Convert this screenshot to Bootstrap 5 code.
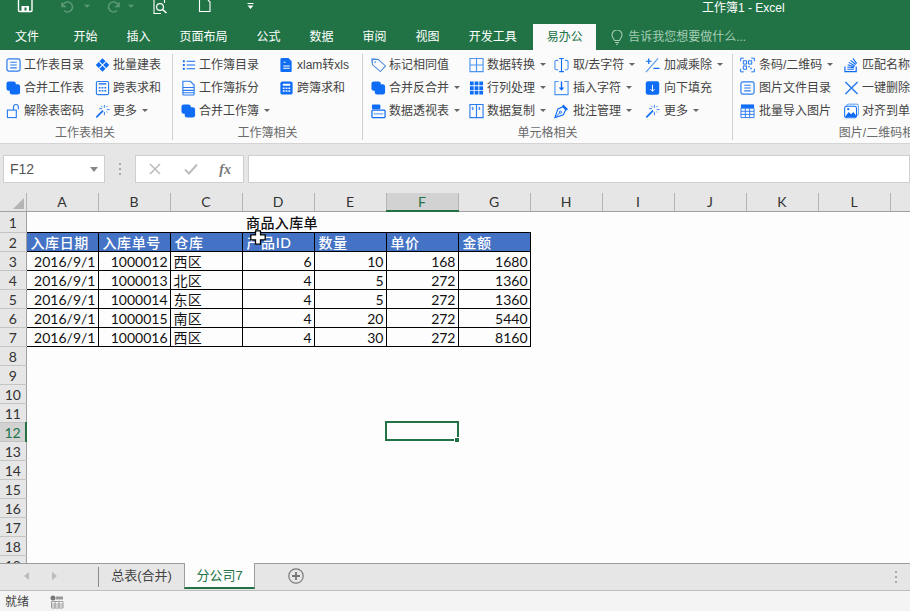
<!DOCTYPE html>
<html lang="zh-CN">
<head>
<meta charset="utf-8">
<title>工作簿1 - Excel</title>
<link href="https://cdn.jsdelivr.net/npm/bootstrap@5.3.0/dist/css/bootstrap.min.css" rel="stylesheet">
<style>
html,body{margin:0;height:611px;overflow:hidden;background:#e6e6e6}
body{font-family:"Liberation Sans","Noto Sans CJK SC",sans-serif;font-size:12px;color:#444;position:relative}
.app-shell{width:910px;height:611px;overflow:hidden}
.title-row{height:24px;background:#217346;color:#fff;flex:none}
.qat-strip{width:702px;height:24px;flex:none}
.title-text{line-height:14px;padding-top:1px}
.tab-row{height:26px;background:#217346;flex:none}
.tab-item{color:#fff;padding:0 14.5px;line-height:26px;white-space:nowrap}
.tab-first{padding-left:15px;padding-right:20px}
.tab-gap{padding-right:16.5px}
.tab-on{background:#fafafa;color:#217346;padding:0 13.5px;line-height:26px;width:63px}
.tell-me{color:#a5cdb5;margin-left:15px;gap:5px;line-height:26px;white-space:nowrap}
.ribbon-bar{height:94px;background:#fbfbfb;border-bottom:1px solid #d4d4d4;flex:none}
.rb-group{padding-top:3px;flex:none;height:93px}
.rb-sep{width:1px;background:#d0d0d0;height:86px;margin-top:4px;flex:none}
.g1{width:172px;padding-left:6px}.g2{width:189px;padding-left:8px}.g3{width:369px;padding-left:8px}.g4{width:300px;padding-left:7px}
.rb-cols{height:69px}
.w89{width:89px}.w98{width:98px}.w85{width:85px}.w91{width:91px}.w104{width:104px}
.rb-item{height:23px;white-space:nowrap;color:#444}
.rb-ic{width:15px;height:16px;margin-right:3px;flex:none;overflow:visible}
.wide-ic .rb-ic{margin-right:4px}
.rb-title{color:#6a6a6a;line-height:22px;text-align:center;margin-left:-8px}
.tri-down{display:inline-block;width:0;height:0;border:3px solid transparent;border-top:3.5px solid #666;border-bottom:0;margin-left:5px}
.fx-band{height:49px;padding:11px 0 10px 3px;background:#e6e6e6;flex:none}
.fx-box{height:28px;background:#fff;border:1px solid #cfcfcf}
.name-box{width:102px;padding:0 6px;font-size:14px;color:#555}
.name-box .tri-down{border-width:4px;border-top-width:5px;border-top-color:#888}
.fx-dots{width:30px}
.dot-v{width:2px;height:2px;background:#aaa;box-shadow:0 -5px 0 #aaa,0 5px 0 #aaa}
.fx-tools{width:109px;padding:0 12px 0 12px}
.fx-glyph{font-family:"Liberation Serif",serif;font-style:italic;font-weight:700;font-size:14px;color:#777}
.fx-input{margin-left:4px;flex:1 1 auto}
.grid-wrap{height:370px;overflow:hidden;background:#fdfdfd;flex:none}
.sheet{table-layout:fixed;border-collapse:collapse;width:962px;font-family:Lato,"Noto Sans CJK SC",sans-serif;font-size:14px;color:#111}
.sheet col.rh{width:26px}.sheet col.ch{width:72px}
.sheet td,.sheet th{padding:2px 1px 0;height:19px;line-height:16px;font-weight:400;white-space:nowrap;overflow:visible}
.sheet tr.hd-row th{height:18px;padding-top:1px;background:#e6e6e6;color:#333;text-align:center;border-bottom:1px solid #a0a0a0;border-right:1px solid #b5b5b5;line-height:16px}
.corner{position:relative}
.corner::after{content:"";position:absolute;right:2px;bottom:2px;border:0 solid transparent;border-width:0 0 11px 11px;border-bottom-color:#b4b4b4}
.sheet tr.hd-row th.col-on{background:#d2d2d2;color:#217346;border-bottom:2px solid #217346}
.sheet tbody th{background:#e6e6e6;color:#333;text-align:center;border-right:1px solid #a0a0a0;border-bottom:1px solid #c4c4c4}
.sheet tbody th.row-on{background:#d2d2d2;color:#217346;border-right:2px solid #217346}
.sheet tr.tall-row td,.sheet tr.tall-row th{height:21px;line-height:18px}
.sheet td.box{border:1px solid #000;padding:2px 2px 0}
.sheet td.num{text-align:right}
.sheet td.head{background:#4472c4;color:#fff;font-weight:500;letter-spacing:.6px;padding-left:4px}
.sheet td.cn{letter-spacing:.3px;padding-left:3px}
.sheet td.ttl{font-weight:500;padding-left:4px;letter-spacing:.4px}
.sel-cell{position:relative}
.sel-cell::before{content:"";position:absolute;left:-1px;top:-1px;width:74px;height:20px;border:2px solid #217346}
.sel-cell::after{content:"";position:absolute;right:-2px;bottom:-2px;width:6px;height:6px;background:#217346;border:1px solid #fff}
.mouse-cross{position:absolute;left:250px;top:230px;width:16px;height:15px}
.tab-strip{height:28px;background:#e6e6e6;border-top:1px solid #9c9c9c;border-bottom:1px solid #bdbdbd;flex:none}
.arrows-area{width:98px;height:24px;padding-left:24px;gap:23px}
.arr-l,.arr-r{width:0;height:0;border:4px solid transparent;border-left-width:0}
.arr-l{border-right:5px solid #bbb}
.arr-r{border-left:5px solid #bbb;border-right-width:0}
.tab-div{width:1px;height:20px;background:#8a8a8a;margin-top:3px}
.sh-tab{color:#444;width:85px;text-align:center;height:22px;line-height:22px;font-size:13px;white-space:nowrap;margin-top:1px}
.sh-on{width:71px;background:#fdfdfd;color:#217346;border-left:1px solid #9c9c9c;border-right:1px solid #9c9c9c;margin-top:-1px;height:26px;line-height:26px;border-bottom:2px solid #217346;text-align:center;font-size:13px;white-space:nowrap}
.add-sheet{margin-left:33px;width:16px;height:16px;flex:none}
.more-dots{margin-left:auto;margin-right:13px}
.status-row{height:20px;background:#f4f4f4;padding-left:5px;padding-top:1px;flex:none}
.status-ic{width:14px;height:14px;margin-left:21px}
</style>
</head>
<body>
<svg width="0" height="0" class="position-absolute">
<defs>
<symbol id="i-doclist" viewBox="0 0 16 16"><rect x="1" y="1.5" width="14" height="13" rx="2" fill="none" stroke="#2b7cf0" stroke-width="1.3"/><path d="M4.5 5h7M4.5 8h7M4.5 11h7" stroke="#2b7cf0" stroke-width="1.2"/></symbol>
<symbol id="i-diamond" viewBox="0 0 16 16"><path d="M8 .8 15.2 8 8 15.2.8 8z" fill="#0f6cf5"/><path d="M4.4 4.4 11.6 11.6M11.6 4.4 4.4 11.6" stroke="#fff" stroke-width="1.1"/></symbol>
<symbol id="i-stack" viewBox="0 0 16 16"><rect x=".5" y="1" width="10" height="10" rx="2.5" fill="#0f6cf5"/><rect x="4" y="4" width="11" height="11" rx="2.5" fill="#0f6cf5"/></symbol>
<symbol id="i-calc" viewBox="0 0 16 16"><rect x="1.5" y="1" width="13" height="14" rx="1.5" fill="none" stroke="#2b7cf0" stroke-width="1.2"/><path d="M4 3.6h8" stroke="#2b7cf0" stroke-width="1.6"/><path d="M4 7h2v1.6H4zM7 7h2v1.6H7zM10 7h2v1.6h-2zM4 10h2v1.6H4zM7 10h2v1.6H7zM10 10h2v1.6h-2z" fill="#2b7cf0"/></symbol>
<symbol id="i-lock" viewBox="0 0 16 16"><rect x="1.5" y="7" width="9.5" height="8" fill="none" stroke="#2b7cf0" stroke-width="1.2"/><path d="M8 7V3.6a2.6 2.6 0 0 1 5.2 0V6" fill="none" stroke="#2b7cf0" stroke-width="1.2"/></symbol>
<symbol id="i-wand" viewBox="0 0 16 16"><path d="M.8 14.2 8 7l1.2 1.2L2 15.4z" fill="#0f6cf5"/><path d="M10 1.5v3M10 9v3.5M12.5 6.500h3M4.500 5.500h3M6.500 2.500l1.500 1.500M13.500 2.500 12 4M13 9.500 12 8.500" stroke="#2b7cf0" stroke-width="1" fill="none"/></symbol>
<symbol id="i-list" viewBox="0 0 16 16"><path d="M2 3h2v2H2zM2 7h2v2H2zM2 11h2v2H2z" fill="#0f6cf5"/><path d="M6 4h9M6 8h9M6 12h9" stroke="#0f6cf5" stroke-width="1.300"/></symbol>
<symbol id="i-filetab" viewBox="0 0 16 16"><path d="M2 .8h8l4 4v9.700a1 1 0 0 1-1 1H3a1 1 0 0 1-1-1z" fill="none" stroke="#2b7cf0" stroke-width="1.200"/><path d="M2 7.500h12M2 10.500h12M2 13h12" stroke="#2b7cf0" stroke-width="1.200"/></symbol>
<symbol id="i-filexl" viewBox="0 0 16 16"><path d="M2.500.5h7.500l3.500 3.500v10.500a1 1 0 0 1-1 1h-10a1 1 0 0 1-1-1V1.500z" fill="#0f6cf5"/><path d="M4.500 9h7M4.500 11.500h7M5 5h2" stroke="#fff" stroke-width="1.100"/></symbol>
<symbol id="i-calcs" viewBox="0 0 16 16"><rect x="1.500" y="1" width="13" height="14" rx="2" fill="#0f6cf5"/><path d="M4 3.500h8v2H4zM4 7.500h2v1.500H4zM7 7.500h2v1.500H7zM10 7.500h2v1.500h-2zM4 10.500h2V12H4zM7 10.500h2V12H7zM10 10.500h2V12h-2z" fill="#fff"/></symbol>
<symbol id="i-tag" viewBox="0 0 16 16"><path d="M1.500 2h6l8 7-5.500 6-8.500-7.500z" fill="none" stroke="#4d8bd6" stroke-width="1.100"/><circle cx="4.500" cy="5" r="1.200" fill="#8ab6ee"/><path d="M.5 5.500V1h4" fill="none" stroke="#8ab6ee"/></symbol>
<symbol id="i-win" viewBox="0 0 16 16"><path d="M1 1h14v14H1zM8 1v14M1 8h14" fill="none" stroke="#4d94ef" stroke-width="1.200"/></symbol>
<symbol id="i-grid" viewBox="0 0 16 16"><path d="M1 1h4v4H1zM6 1h4v4H6zM11 1h4v4h-4zM1 6h4v4H1zM6 6h4v4H6zM11 6h4v4h-4zM1 11h4v4H1zM6 11h4v4H6zM11 11h4v4h-4z" fill="#0f6cf5"/></symbol>
<symbol id="i-pivot" viewBox="0 0 16 16"><rect x="1" y="1" width="9" height="5" rx="1" fill="#0f6cf5"/><rect x="1" y="7" width="14" height="8" rx="1" fill="none" stroke="#0f6cf5" stroke-width="1.300"/><path d="M3 11h10" stroke="#7aaef5" stroke-width="1.500"/></symbol>
<symbol id="i-wcopy" viewBox="0 0 16 16"><path d="M1 1h14v14H1zM8 1v14" fill="none" stroke="#2b7cf0" stroke-width="1.200"/><path d="M4 3.500v3M11 3.500v3" stroke="#2b7cf0" stroke-width="1.100"/><path d="M3 5.500l1 1.300 1-1.300M10 5.500l1 1.300 1-1.300" fill="none" stroke="#2b7cf0" stroke-width=".8"/></symbol>
<symbol id="i-ibeam" viewBox="0 0 16 16"><path d="M4.500 3H2.500A1.500 1.500 0 0 0 1 4.500v7A1.500 1.500 0 0 0 2.500 13h2M11.500 3h2A1.500 1.500 0 0 1 15 4.500v7a1.500 1.500 0 0 1-1.500 1.500h-2" fill="none" stroke="#4d94ef" stroke-width="1.200"/><path d="M5.500 1H10.500M5.500 15h5M8 1v14" fill="none" stroke="#0f6cf5" stroke-width="1.200"/></symbol>
<symbol id="i-ins" viewBox="0 0 16 16"><path d="M5 1H1v14h14V1h-4" fill="none" stroke="#4d94ef" stroke-width="1.200"/><path d="M8 1v8" stroke="#0f6cf5" stroke-width="1.500"/><path d="M5 7.500h6L8 11z" fill="#0f6cf5"/></symbol>
<symbol id="i-pen" viewBox="0 0 16 16"><path d="M9.500 3.500 12.500 6.500 10 12 1 15 4 6z" fill="none" stroke="#0f6cf5" stroke-width="1.200"/><path d="M10 1l5 5-2 1.500-4.500-4.500z" fill="#0f6cf5"/><path d="M1.500 14.500 6 10" stroke="#0f6cf5"/><circle cx="6.800" cy="9.200" r="1.200" fill="none" stroke="#0f6cf5"/></symbol>
<symbol id="i-pm" viewBox="0 0 16 16"><path d="M1 4h6M4 1v6M9 11.500h6.500" stroke="#0f6cf5" stroke-width="1.300"/><path d="M1 15.500 14 1" stroke="#4d94ef" stroke-width="1.100"/></symbol>
<symbol id="i-down" viewBox="0 0 16 16"><rect x=".8" y=".8" width="14.400" height="14.400" rx="2.500" fill="#0f6cf5"/><path d="M8 4.500v7M5.800 9.200 8 11.500l2.200-2.300" fill="none" stroke="#fff" stroke-width="1"/></symbol>
<symbol id="i-qr" viewBox="0 0 16 16"><path d="M.7 4V.7H4M12 .7h3.300V4M.7 12v3.300H4M12 15.300h3.300V12" fill="none" stroke="#0f6cf5" stroke-width="1"/><path d="M3.500 3.500h3.500v3.500H3.500zM9 3.500h3.500v3.500H9zM3.500 9h3.500v3.500H3.500z" fill="none" stroke="#0f6cf5"/><path d="M9 9h1.500v1.500H9zM11 11h1.500v1.500H11z" fill="#0f6cf5"/></symbol>
<symbol id="i-so" viewBox="0 0 16 16"><path d="M1 9.500v5.500h12V9.500" fill="none" stroke="#0f6cf5" stroke-width="1.300"/><path d="M3.500 12.500h7M3.500 10.200l7 .6M4 7.800l7 2M5 5.200l6.500 3.500M7 3l5.500 4.500M9.500 1l4 5.500" stroke="#0f6cf5" stroke-width="1.200" fill="none"/></symbol>
<symbol id="i-x" viewBox="0 0 16 16"><path d="M1.500 1.500 14.500 14.500M14.500 1.500 1.500 14.500" stroke="#2b7cf0" stroke-width="1.600"/></symbol>
<symbol id="i-img" viewBox="0 0 16 16"><rect x="3" y=".7" width="12.300" height="12" rx="1.500" fill="none" stroke="#4d94ef"/><rect x=".7" y="3" width="12.600" height="12.300" rx="2" fill="#fff" stroke="#0f6cf5" stroke-width="1.100"/><path d="M1.500 13.500 5 9l2.500 2.500L10 9l3 4v1.500H1.500z" fill="#0f6cf5"/><circle cx="4.500" cy="6" r="1.200" fill="#0f6cf5"/></symbol>
<symbol id="i-tbl" viewBox="0 0 16 16"><path d="M1 1h14v4H1z" fill="#0f6cf5"/><path d="M1 5h14v10H1zM1 8.300h14M1 11.600h14M5.700 5v10M10.300 5v10" fill="none" stroke="#2b7cf0" stroke-width="1"/></symbol>
</defs>
</svg>

<div class="app-shell d-flex flex-column">
  <div class="title-row d-flex">
    <svg class="qat-strip" viewBox="0 0 702 24">
      <path d="M18.500 0V10.500a1 1 0 0 0 1 1h11.500a1 1 0 0 0 1-1V0" fill="none" stroke="#fff" stroke-width="1.400"/>
      <path d="M21.500 6h7.500v5h-7.500z" fill="#fff"/><path d="M24.500 7.500h2v3h-2z" fill="#217346"/>
      <path d="M63 2.500v4h4M63.500 6.500a5 5 0 1 1 1.500 4" fill="none" stroke="#5c9a78" stroke-width="1.500" transform="translate(-1 0)"/>
      <path d="M84 4.800h6L87 7.800z" fill="#5c9a78"/>
      <path d="M119 2.500v4h-4M118.500 6.500a5 5 0 1 0-1.500 4" fill="none" stroke="#5c9a78" stroke-width="1.500"/>
      <path d="M128 4.800h6L131 7.800z" fill="#5c9a78"/>
      <path d="M154 0v13.500h7M164.500 0v3" fill="none" stroke="#fff" stroke-width="1.100"/>
      <circle cx="160" cy="7" r="3.400" fill="none" stroke="#fff" stroke-width="1.200"/><path d="M162.500 9.500l4 3.500" stroke="#fff" stroke-width="1.600"/>
      <path d="M199.500 0v11.500h10.500V2L208 0" fill="none" stroke="#fff" stroke-width="1.100"/>
      <path d="M247.500 3.500h6" stroke="#fff" stroke-width="1"/><path d="M247.500 5.500h6L250.500 9z" fill="#fff"/>
    </svg>
    <div class="title-text">工作簿1 - Excel</div>
  </div>

  <nav class="tab-row d-flex">
    <div class="tab-item tab-first">文件</div>
    <div class="tab-item">开始</div>
    <div class="tab-item">插入</div>
    <div class="tab-item">页面布局</div>
    <div class="tab-item">公式</div>
    <div class="tab-item">数据</div>
    <div class="tab-item">审阅</div>
    <div class="tab-item">视图</div>
    <div class="tab-item tab-gap">开发工具</div>
    <div class="tab-on">易办公</div>
    <div class="tell-me d-flex align-items-center">
      <svg width="12" height="15" viewBox="0 0 12 15"><path d="M3.500 10.500C3 8.500 1 7.800 1 5a5 5 0 0 1 10 0c0 2.800-2 3.500-2.500 5.500zM4 12.500h4M5 14.300h2" fill="none" stroke="#a5cdb5" stroke-width="1.100"/></svg>
      <span>告诉我您想要做什么...</span>
    </div>
  </nav>

  <div class="ribbon-bar d-flex">
    <section class="rb-group g1">
      <div class="rb-cols d-flex">
        <div class="w89">
          <div class="rb-item d-flex align-items-center"><svg class="rb-ic"><use href="#i-doclist"/></svg>工作表目录</div>
          <div class="rb-item d-flex align-items-center"><svg class="rb-ic"><use href="#i-stack"/></svg>合并工作表</div>
          <div class="rb-item d-flex align-items-center"><svg class="rb-ic"><use href="#i-lock"/></svg>解除表密码</div>
        </div>
        <div>
          <div class="rb-item d-flex align-items-center"><svg class="rb-ic"><use href="#i-diamond"/></svg>批量建表</div>
          <div class="rb-item d-flex align-items-center"><svg class="rb-ic"><use href="#i-calc"/></svg>跨表求和</div>
          <div class="rb-item d-flex align-items-center"><svg class="rb-ic"><use href="#i-wand"/></svg>更多<span class="tri-down"></span></div>
        </div>
      </div>
      <div class="rb-title">工作表相关</div>
    </section>
    <div class="rb-sep"></div>
    <section class="rb-group g2">
      <div class="rb-cols d-flex">
        <div class="w98">
          <div class="rb-item d-flex align-items-center"><svg class="rb-ic"><use href="#i-list"/></svg>工作簿目录</div>
          <div class="rb-item d-flex align-items-center"><svg class="rb-ic"><use href="#i-filetab"/></svg>工作簿拆分</div>
          <div class="rb-item d-flex align-items-center"><svg class="rb-ic"><use href="#i-stack"/></svg>合并工作簿<span class="tri-down"></span></div>
        </div>
        <div>
          <div class="rb-item d-flex align-items-center"><svg class="rb-ic"><use href="#i-filexl"/></svg>xlam转xls</div>
          <div class="rb-item d-flex align-items-center"><svg class="rb-ic"><use href="#i-calcs"/></svg>跨簿求和</div>
        </div>
      </div>
      <div class="rb-title">工作簿相关</div>
    </section>
    <div class="rb-sep"></div>
    <section class="rb-group g3">
      <div class="rb-cols d-flex">
        <div class="w98">
          <div class="rb-item d-flex align-items-center"><svg class="rb-ic"><use href="#i-tag"/></svg>标记相同值</div>
          <div class="rb-item d-flex align-items-center"><svg class="rb-ic"><use href="#i-stack"/></svg>合并反合并<span class="tri-down"></span></div>
          <div class="rb-item d-flex align-items-center"><svg class="rb-ic"><use href="#i-pivot"/></svg>数据透视表<span class="tri-down"></span></div>
        </div>
        <div class="w85">
          <div class="rb-item d-flex align-items-center"><svg class="rb-ic"><use href="#i-win"/></svg>数据转换<span class="tri-down"></span></div>
          <div class="rb-item d-flex align-items-center"><svg class="rb-ic"><use href="#i-grid"/></svg>行列处理<span class="tri-down"></span></div>
          <div class="rb-item d-flex align-items-center"><svg class="rb-ic"><use href="#i-wcopy"/></svg>数据复制<span class="tri-down"></span></div>
        </div>
        <div class="w91 wide-ic">
          <div class="rb-item d-flex align-items-center"><svg class="rb-ic"><use href="#i-ibeam"/></svg>取/去字符<span class="tri-down"></span></div>
          <div class="rb-item d-flex align-items-center"><svg class="rb-ic"><use href="#i-ins"/></svg>插入字符<span class="tri-down"></span></div>
          <div class="rb-item d-flex align-items-center"><svg class="rb-ic"><use href="#i-pen"/></svg>批注管理<span class="tri-down"></span></div>
        </div>
        <div class="wide-ic">
          <div class="rb-item d-flex align-items-center"><svg class="rb-ic"><use href="#i-pm"/></svg>加减乘除<span class="tri-down"></span></div>
          <div class="rb-item d-flex align-items-center"><svg class="rb-ic"><use href="#i-down"/></svg>向下填充</div>
          <div class="rb-item d-flex align-items-center"><svg class="rb-ic"><use href="#i-wand"/></svg>更多<span class="tri-down"></span></div>
        </div>
      </div>
      <div class="rb-title">单元格相关</div>
    </section>
    <div class="rb-sep"></div>
    <section class="rb-group g4">
      <div class="rb-cols d-flex">
        <div class="w104 wide-ic">
          <div class="rb-item d-flex align-items-center"><svg class="rb-ic"><use href="#i-qr"/></svg>条码/二维码<span class="tri-down"></span></div>
          <div class="rb-item d-flex align-items-center"><svg class="rb-ic"><use href="#i-doclist"/></svg>图片文件目录</div>
          <div class="rb-item d-flex align-items-center"><svg class="rb-ic"><use href="#i-tbl"/></svg>批量导入图片</div>
        </div>
        <div>
          <div class="rb-item d-flex align-items-center"><svg class="rb-ic"><use href="#i-so"/></svg>匹配名称</div>
          <div class="rb-item d-flex align-items-center"><svg class="rb-ic"><use href="#i-x"/></svg>一键删除</div>
          <div class="rb-item d-flex align-items-center"><svg class="rb-ic"><use href="#i-img"/></svg>对齐到单元格</div>
        </div>
      </div>
      <div class="rb-title">图片/二维码相关</div>
    </section>
  </div>

  <div class="fx-band d-flex">
    <div class="fx-box name-box d-flex align-items-center justify-content-between"><span>F12</span><span class="tri-down"></span></div>
    <div class="fx-dots d-flex align-items-center justify-content-center"><span class="dot-v"></span></div>
    <div class="fx-box fx-tools d-flex align-items-center justify-content-between">
      <svg width="14" height="14" viewBox="0 0 14 14"><path d="M2 2l10 10M12 2 2 12" stroke="#bdbdbd" stroke-width="1.600"/></svg>
      <svg width="16" height="14" viewBox="0 0 16 14"><path d="M2 7.500l4 4 8-9" fill="none" stroke="#bdbdbd" stroke-width="2"/></svg>
      <span class="fx-glyph">fx</span>
    </div>
    <div class="fx-box fx-input"></div>
  </div>

  <div class="grid-wrap">
    <table class="sheet">
      <colgroup><col class="rh"><col class="ch"><col class="ch"><col class="ch"><col class="ch"><col class="ch"><col class="ch"><col class="ch"><col class="ch"><col class="ch"><col class="ch"><col class="ch"><col class="ch"><col class="ch"></colgroup>
      <thead>
        <tr class="hd-row"><th class="corner"></th><th>A</th><th>B</th><th>C</th><th>D</th><th>E</th><th class="col-on">F</th><th>G</th><th>H</th><th>I</th><th>J</th><th>K</th><th>L</th><th>M</th></tr>
      </thead>
      <tbody>
        <tr class="tall-row"><th>1</th><td></td><td></td><td></td><td class="ttl">商品入库单</td><td colspan="9"></td></tr>
        <tr><th>2</th><td class="box head">入库日期</td><td class="box head">入库单号</td><td class="box head">仓库</td><td class="box head">产品ID</td><td class="box head">数量</td><td class="box head">单价</td><td class="box head">金额</td><td colspan="6"></td></tr>
        <tr><th>3</th><td class="box num">2016/9/1</td><td class="box num">1000012</td><td class="box cn">西区</td><td class="box num">6</td><td class="box num">10</td><td class="box num">168</td><td class="box num">1680</td><td colspan="6"></td></tr>
        <tr><th>4</th><td class="box num">2016/9/1</td><td class="box num">1000013</td><td class="box cn">北区</td><td class="box num">4</td><td class="box num">5</td><td class="box num">272</td><td class="box num">1360</td><td colspan="6"></td></tr>
        <tr><th>5</th><td class="box num">2016/9/1</td><td class="box num">1000014</td><td class="box cn">东区</td><td class="box num">4</td><td class="box num">5</td><td class="box num">272</td><td class="box num">1360</td><td colspan="6"></td></tr>
        <tr><th>6</th><td class="box num">2016/9/1</td><td class="box num">1000015</td><td class="box cn">南区</td><td class="box num">4</td><td class="box num">20</td><td class="box num">272</td><td class="box num">5440</td><td colspan="6"></td></tr>
        <tr><th>7</th><td class="box num">2016/9/1</td><td class="box num">1000016</td><td class="box cn">西区</td><td class="box num">4</td><td class="box num">30</td><td class="box num">272</td><td class="box num">8160</td><td colspan="6"></td></tr>
        <tr><th>8</th><td colspan="13"></td></tr>
        <tr><th>9</th><td colspan="13"></td></tr>
        <tr><th>10</th><td colspan="13"></td></tr>
        <tr><th>11</th><td colspan="13"></td></tr>
        <tr><th class="row-on">12</th><td colspan="5"></td><td class="sel-cell"></td><td colspan="7"></td></tr>
        <tr><th>13</th><td colspan="13"></td></tr>
        <tr><th>14</th><td colspan="13"></td></tr>
        <tr><th>15</th><td colspan="13"></td></tr>
        <tr><th>16</th><td colspan="13"></td></tr>
        <tr><th>17</th><td colspan="13"></td></tr>
        <tr><th>18</th><td colspan="13"></td></tr>
        <tr><th>19</th><td colspan="13"></td></tr>
      </tbody>
    </table>
  </div>

  <div class="tab-strip d-flex align-items-start">
    <div class="arrows-area d-flex align-items-center"><span class="arr-l"></span><span class="arr-r"></span></div>
    <div class="tab-div"></div>
    <div class="sh-tab">总表(合并)</div>
    <div class="sh-on">分公司7</div>
    <svg class="add-sheet mt-1" viewBox="0 0 16 16"><circle cx="8" cy="8" r="7.200" fill="none" stroke="#777" stroke-width="1.200"/><path d="M4 8h8M8 4v8" stroke="#777" stroke-width="1.800"/></svg>
    <div class="more-dots d-flex align-items-center mt-2 pt-1"><span class="dot-v"></span></div>
  </div>

  <div class="status-row d-flex align-items-center">
    <span>就绪</span>
    <svg class="status-ic" viewBox="0 0 14 14"><circle cx="3" cy="3" r="2.500" fill="#777"/><path d="M6 1.500h7v3H6z" fill="#999"/><path d="M1.500 6.500h11.500v6.500H1.500zM1.500 9h11.500M1.500 11h11.500M5 6.500V13M9 6.500V13" fill="#fff" stroke="#888" stroke-width=".8"/></svg>
  </div>
</div>

<svg class="mouse-cross" viewBox="0 0 16 15"><path d="M5.500 .8h5v4h4.700v5h-4.700v4.400h-5V9.800H.8v-5h4.700z" fill="#fff" stroke="#000" stroke-width="1.300"/></svg>

<script src="https://cdn.jsdelivr.net/npm/bootstrap@5.3.0/dist/js/bootstrap.bundle.min.js"></script>
</body>
</html>
